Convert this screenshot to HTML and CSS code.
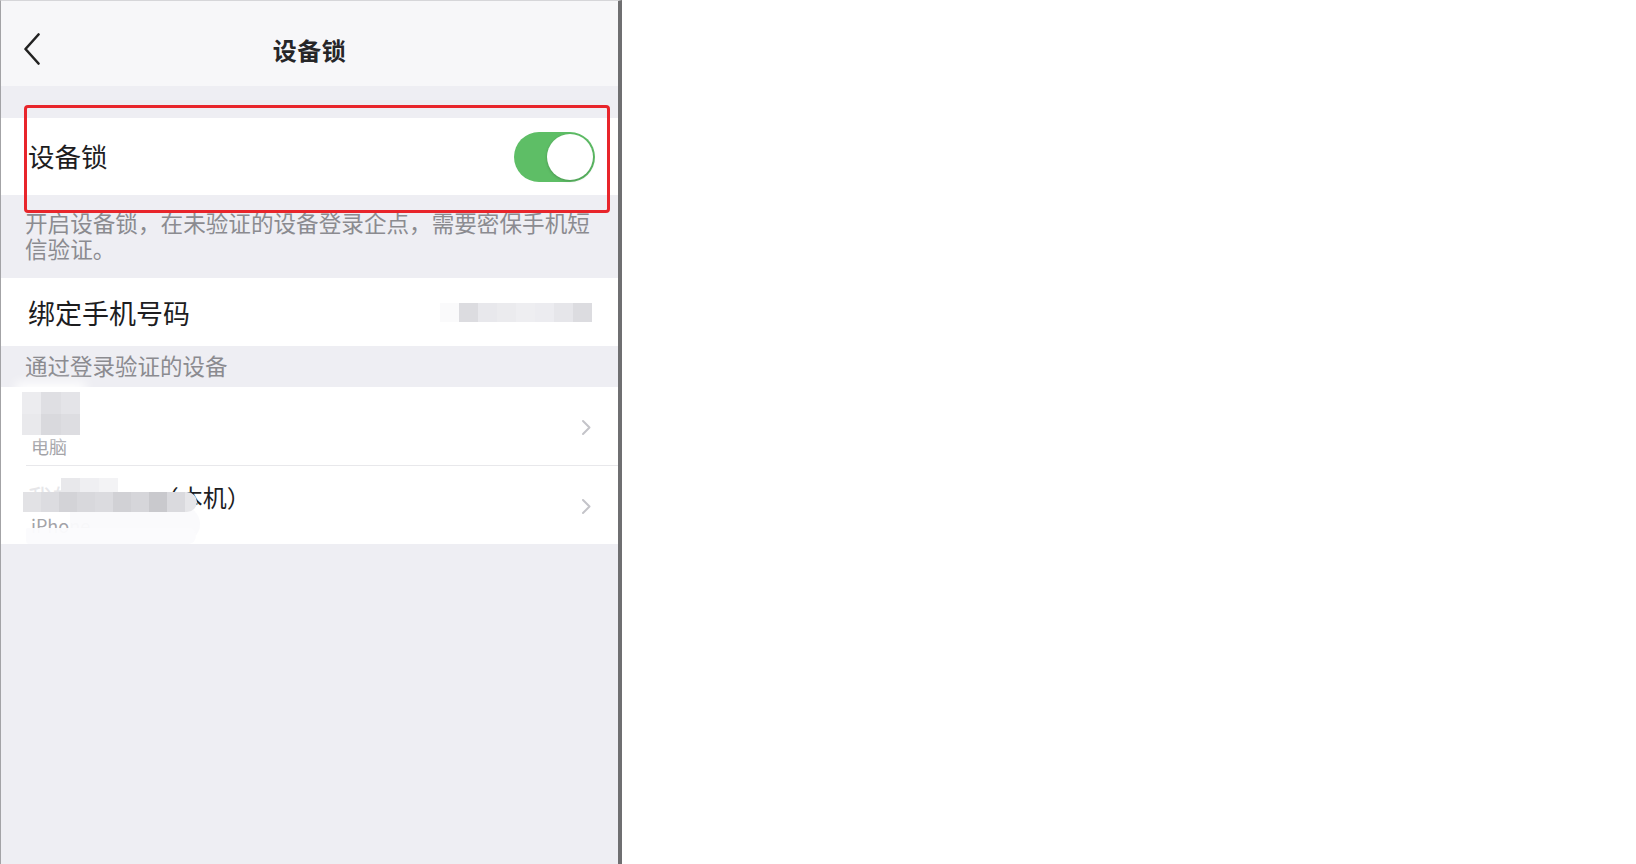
FILE: index.html
```html
<!DOCTYPE html>
<html lang="zh-CN">
<head>
<meta charset="utf-8">
<title>设备锁</title>
<link rel="stylesheet" href="styles.css">
</head>
<body>
<div class="screen">
  <div class="phone">
    <header class="nav">
      <div class="nav-left">
        <svg class="back" width="18" height="32" viewBox="0 0 18 32"><path d="M15.5 1.5 L2.5 16 L15.5 30.5" fill="none" stroke="#222" stroke-width="2.6" stroke-linecap="round" stroke-linejoin="round"/></svg>
      </div>
      <h1 class="nav-title">设备锁</h1>
      <div class="nav-right"></div>
    </header>
    <div class="gap"></div>
    <div class="cell cell-lock">
      <span class="cell-label">设备锁</span>
      <div class="switch on"><span class="knob"></span></div>
    </div>
    <p class="note">开启设备锁，在未验证的设备登录企点，需要密保手机短信验证。</p>
    <div class="cell cell-phone">
      <span class="cell-label">绑定手机号码</span>
      <div class="mosaic mosaic-phone">
        <i class="m1"></i><i class="m2"></i><i class="m3"></i><i class="m4"></i><i class="m5"></i><i class="m6"></i><i class="m7"></i><i class="m2"></i>
      </div>
    </div>
    <div class="section-title">通过登录验证的设备</div>
    <div class="devices">
      <div class="device">
        <div class="device-info">
          <div class="device-name">&nbsp;</div>
          <div class="device-type">电脑</div>
        </div>
        <svg class="chev" width="11" height="17" viewBox="0 0 11 17"><path d="M2 2 L8.5 8.5 L2 15" fill="none" stroke="#c4c4c9" stroke-width="2" stroke-linecap="round" stroke-linejoin="round"/></svg>
        <div class="mosaic mosaic-pc">
          <i class="p1"></i><i class="p2"></i><i class="p3"></i>
          <i class="p4"></i><i class="p5"></i><i class="p6"></i>
        </div>
      </div>
      <div class="device">
        <div class="device-info">
          <div class="device-name"><span class="hidden-name">我的iPhone</span>（本机）</div>
          <div class="device-type">iPhone</div>
        </div>
        <svg class="chev" width="11" height="17" viewBox="0 0 11 17"><path d="M2 2 L8.5 8.5 L2 15" fill="none" stroke="#c4c4c9" stroke-width="2" stroke-linecap="round" stroke-linejoin="round"/></svg>
        <div class="smudge"></div>
        <div class="smudge-low"></div>
        <div class="mosaic mosaic-top">
          <i class="q1"></i><i class="q2"></i><i class="q3"></i>
        </div>
        <div class="mosaic mosaic-name">
          <i class="n1"></i><i class="n2"></i><i class="n3"></i><i class="n4"></i><i class="n5"></i><i class="n6"></i><i class="n7"></i><i class="n8"></i><i class="n9"></i><i class="n10"></i>
        </div>
      </div>
    </div>
    <div class="highlight"></div>
  </div>
  <div class="blank"></div>
</div>
</body>
</html>
```

FILE: styles.css
```css
* { box-sizing: border-box; }

html, body {
  margin: 0;
  padding: 0;
  background: #ffffff;
  font-family: "Noto Sans CJK SC", "Noto Sans", "Liberation Sans", sans-serif;
}

.screen {
  display: flex;
  width: 1636px;
  height: 864px;
  overflow: hidden;
}

.phone {
  position: relative;
  width: 622px;
  height: 864px;
  flex: none;
  background: #eeeef3;
  border-left: 1px solid #a3a3a6;
  border-right: 4px solid #6f6f71;
  border-top: 1px solid #d6d6d9;
  display: flex;
  flex-direction: column;
}

.blank {
  flex: 1;
  background: #ffffff;
}

/* nav */
.nav {
  height: 85px;
  padding-top: 12px;
  background: #f7f7f9;
  display: grid;
  grid-template-columns: 1fr auto 1fr;
  align-items: center;
}

.nav-left {
  padding-left: 22px;
  display: flex;
  align-items: center;
}

.back { display: block; margin-top: -2px; }

.nav-title {
  margin: 0;
  font-size: 24px;
  font-weight: 700;
  color: #262628;
  letter-spacing: 0.5px;
}

.gap { height: 32px; }

/* cells */
.cell {
  background: #ffffff;
  display: flex;
  align-items: center;
  justify-content: space-between;
  padding-left: 27px;
}

.cell-label {
  font-size: 26.5px;
  color: #1d1d1f;
  line-height: 1;
}

.cell-phone .cell-label { font-size: 27px; }

.cell-lock {
  height: 77px;
  padding-right: 23px;
}

.switch {
  width: 81px;
  height: 50px;
  border-radius: 25px;
  background: #5ebe66;
  position: relative;
  display: flex;
  align-items: center;
  justify-content: flex-end;
  padding-right: 2px;
}

.knob {
  width: 46px;
  height: 46px;
  border-radius: 50%;
  background: #ffffff;
  box-shadow: 0 1px 3px rgba(0, 0, 0, 0.22);
}

.note {
  margin: 0;
  padding: 15px 23px 16px 24px;
  font-size: 22.6px;
  line-height: 26px;
  color: #8b8b90;
}

.cell-phone {
  height: 68px;
  padding-right: 26px;
}

.mosaic { display: flex; }
.mosaic i { display: block; }

.mosaic-phone i {
  width: 19px;
  height: 19px;
}
.mosaic-phone .m1 { background: #fafafb; }
.mosaic-phone .m2 { background: #dcdce0; }
.mosaic-phone .m3 { background: #e8e8ec; }
.mosaic-phone .m4 { background: #ebebee; }
.mosaic-phone .m5 { background: #eeeef1; }
.mosaic-phone .m6 { background: #ececf0; }
.mosaic-phone .m7 { background: #e6e6ea; }

.section-title {
  height: 41px;
  padding-left: 24px;
  padding-bottom: 3px;
  display: flex;
  align-items: center;
  font-size: 22.5px;
  color: #8b8b90;
}

/* devices */
.devices {
  background: #ffffff;
  display: flex;
  flex-direction: column;
}

.device {
  position: relative;
  height: 78px;
  display: flex;
  align-items: center;
  justify-content: space-between;
  padding: 0 26px 0 30px;
}

.device + .device {
  height: 79px;
  border-top: 1px solid #e8e8eb;
  margin-left: 25px;
  padding-left: 5px;
}

.device-info {
  display: flex;
  flex-direction: column;
  padding-top: 10px;
}

.device-name {
  font-size: 24px;
  line-height: 30px;
  color: #1d1d1f;
  margin-left: -3px;
}

.device-type {
  font-size: 18px;
  line-height: 26px;
  color: #a3a3a8;
}

.hidden-name { color: #e6e6e9; }

.chev { display: block; margin-top: 2px; }

.mosaic-pc {
  position: absolute;
  left: 21px;
  top: 5px;
  display: grid;
  grid-template-columns: 19px 20px 19px;
  grid-template-rows: 22px 21px;
  box-shadow: 0 -4px 10px 6px rgba(255, 255, 255, 0.9);
}
.mosaic-pc .p1 { background: #ececef; }
.mosaic-pc .p2 { background: #dfdfe3; }
.mosaic-pc .p3 { background: #e4e4e8; }
.mosaic-pc .p4 { background: #e9e9ec; }
.mosaic-pc .p5 { background: #d9d9dd; }
.mosaic-pc .p6 { background: #dddde1; }

.smudge {
  position: absolute;
  left: 44px;
  top: 40px;
  width: 130px;
  height: 36px;
  border-radius: 10px 30px 30px 20px;
  background: rgba(250, 250, 252, 0.96);
}

.smudge-low {
  position: absolute;
  left: 0;
  top: 62px;
  width: 170px;
  height: 16px;
  border-radius: 4px 20px 20px 10px;
  background: rgba(251, 251, 253, 0.97);
}

.mosaic-top {
  position: absolute;
  left: 35px;
  top: 12px;
}
.mosaic-top i { width: 19px; height: 14px; }
.mosaic-top .q1 { background: #e8e8eb; }
.mosaic-top .q2 { background: #efeff2; }
.mosaic-top .q3 { background: #f3f3f5; }

.mosaic-name {
  position: absolute;
  left: -3px;
  top: 26px;
}
.mosaic-name i { width: 18px; height: 20px; }
.mosaic-name .n1 { background: #e2e2e5; }
.mosaic-name .n2 { background: #dcdce0; }
.mosaic-name .n3 { background: #d3d3d7; }
.mosaic-name .n4 { background: #d8d8dc; }
.mosaic-name .n5 { background: #dbdbdf; }
.mosaic-name .n6 { background: #d1d1d5; }
.mosaic-name .n7 { background: #d6d6da; }
.mosaic-name .n8 { background: #c9c9cd; }
.mosaic-name .n9 { background: #dadade; }
.mosaic-name .n10 { width: 12px; background: #e6e6e9; border-radius: 0 10px 10px 0; }

/* annotation */
.highlight {
  position: absolute;
  left: 23px;
  top: 104px;
  width: 586px;
  height: 108px;
  border: 3.5px solid #e8252b;
  border-radius: 4px;
  pointer-events: none;
}
```
